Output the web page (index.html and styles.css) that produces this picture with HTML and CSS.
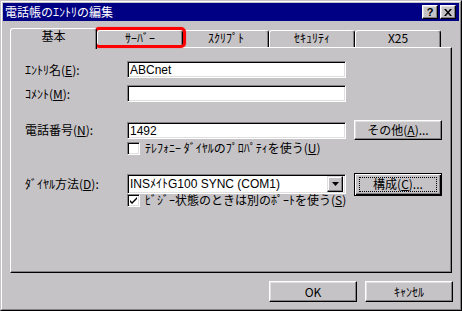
FILE: index.html
```html
<!DOCTYPE html>
<html lang="ja">
<head>
<meta charset="utf-8">
<title>電話帳のｴﾝﾄﾘの編集</title>
<link rel="stylesheet" href="styles.css">
</head>
<body>
<div class="window">
  <div class="window-inner">
    <div class="titlebar">
      <span class="title">電話帳のｴﾝﾄﾘの編集</span>
      <div class="tb-buttons">
        <span class="tb-btn help">?</span>
        <span class="tb-btn close">
          <svg width="8" height="7" viewBox="0 0 8 7"><path d="M0 0h2l2 2.5L6 0h2L5 3.5 8 7H6L4 4.5 2 7H0l3-3.5z" fill="#000"/></svg>
        </span>
      </div>
    </div>
    <div class="client">
      <div class="tabs">
        <div class="tab active">基本</div>
        <div class="tab marked">ｻｰﾊﾞｰ<span class="mark"></span></div>
        <div class="tab">ｽｸﾘﾌﾟﾄ</div>
        <div class="tab">ｾｷｭﾘﾃｨ</div>
        <div class="tab">X25</div>
      </div>
      <div class="panel">
        <div class="row r1">
          <span class="lbl">ｴﾝﾄﾘ名(<u>E</u>):</span>
          <div class="field">ABCnet</div>
        </div>
        <div class="row r2">
          <span class="lbl">ｺﾒﾝﾄ(<u>M</u>):</span>
          <div class="field"></div>
        </div>
        <div class="row r3">
          <span class="lbl">電話番号(<u>N</u>):</span>
          <div class="field">1492</div>
          <div class="btn side">その他(<u>A</u>)...</div>
        </div>
        <div class="check c1">
          <span class="cb"></span>
          <span class="cb-text">ﾃﾚﾌｫﾆｰ ﾀﾞｲﾔﾙのﾌﾟﾛﾊﾟﾃｨを使う(<u>U</u>)</span>
        </div>
        <div class="row r4">
          <span class="lbl">ﾀﾞｲﾔﾙ方法(<u>D</u>):</span>
          <div class="field combo">
            <span class="combo-text">INSﾒｲﾄG100 SYNC (COM1)</span>
            <span class="drop"><svg width="7" height="4" viewBox="0 0 7 4"><path d="M0 0h7L3.5 4z" fill="#000"/></svg></span>
          </div>
          <div class="btn side default"><span class="focus">構成(<u>C</u>)...</span></div>
        </div>
        <div class="check c2">
          <span class="cb"><svg width="9" height="9" viewBox="0 0 9 9"><path d="M1 4l2 2 5-5v2L3 8 1 6z" fill="#000"/></svg></span>
          <span class="cb-text">ﾋﾞｼﾞｰ状態のときは別のﾎﾟｰﾄを使う(<u>S</u>)</span>
        </div>
      </div>
      <div class="footer">
        <div class="btn foot">OK</div>
        <div class="btn foot">ｷｬﾝｾﾙ</div>
      </div>
    </div>
  </div>
</div>
</body>
</html>
```

FILE: styles.css
```css
* { box-sizing: border-box; }
html, body { margin: 0; padding: 0; }
body {
  width: 462px;
  height: 311px;
  background: #c6c3c6;
  font-family: "Noto Sans CJK JP", sans-serif;
  font-size: 12px;
  line-height: 14px;
  color: #000;
}
u { text-decoration: underline; text-underline-offset: 1px; }

.window {
  width: 462px;
  height: 311px;
  border: 1px solid;
  border-color: #c6c3c6 #000 #000 #c6c3c6;
  background: #c6c3c6;
  display: flex;
}
.window-inner {
  flex: 1;
  border: 1px solid;
  border-color: #fff #848284 #848284 #fff;
  padding: 1px;
  display: flex;
  flex-direction: column;
}

.titlebar {
  height: 18px;
  background: #000084;
  color: #fff;
  display: flex;
  align-items: center;
  justify-content: space-between;
  padding: 0 3px 0 2px;
}
.title { font-size: 12px; letter-spacing: 0; }
.tb-buttons { display: flex; gap: 2px; }
.tb-btn {
  width: 16px;
  height: 14px;
  background: #c6c3c6;
  border: 1px solid;
  border-color: #fff #000 #000 #fff;
  box-shadow: inset -1px -1px #848284, inset 1px 1px #dedfde;
  color: #000;
  display: flex;
  align-items: center;
  justify-content: center;
  font-family: "Liberation Sans", sans-serif;
  font-weight: bold;
  font-size: 11px;
  line-height: 11px;
}

.client {
  flex: 1;
  padding: 7px 7px 0 7px;
  display: flex;
  flex-direction: column;
}

.tabs {
  display: flex;
  align-items: flex-end;
  height: 19px;
  position: relative;
  z-index: 1;
}
.tab {
  width: 86px;
  height: 17px;
  border: 1px solid;
  border-color: #fff #000 transparent #fff;
  border-bottom: none;
  border-radius: 3px 3px 0 0;
  box-shadow: inset -1px 0 #848284;
  background: #c6c3c6;
  display: flex;
  justify-content: center;
  align-items: flex-start;
}
.tab.active {
  width: 87px;
  height: 21px;
  margin-bottom: -2px;
  position: relative;
  z-index: 2;
}
.tab.marked { position: relative; }
.mark {
  position: absolute;
  left: -4px;
  top: -4px;
  width: 92px;
  height: 21px;
  border: 3px solid #ff0000;
  border-radius: 5px;
  box-shadow: 0 0 1px #ff4040;
}

.panel {
  height: 226px;
  border: 1px solid;
  border-color: #fff #000 #000 #fff;
  box-shadow: inset -1px -1px #848284;
  padding: 13px 0 0 14px;
  display: flex;
  flex-direction: column;
}

.row { display: flex; align-items: center; }
.lbl { width: 102px; flex: none; white-space: nowrap; }
.r1 { height: 17px; }
.r2 { height: 17px; margin-top: 7px; }
.r3 { height: 20px; margin-top: 18px; }
.r4 { height: 20px; margin-top: 19px; }

.field {
  width: 219px;
  height: 17px;
  flex: none;
  background: #fff;
  border: 1px solid;
  border-color: #848284 #fff #fff #848284;
  box-shadow: inset 1px 1px #000, inset -1px -1px #dedfde;
  padding: 1px 0 0 2px;
  font-family: "Liberation Sans", "Noto Sans CJK JP", sans-serif;
  font-size: 12px;
  line-height: 14px;
  white-space: nowrap;
}
.field.combo {
  height: 20px;
  display: flex;
  align-items: center;
  justify-content: space-between;
  padding: 0 2px 0 2px;
}
.drop {
  width: 16px;
  height: 16px;
  background: #c6c3c6;
  border: 1px solid;
  border-color: #dedfde #000 #000 #dedfde;
  box-shadow: inset -1px -1px #848284, inset 1px 1px #fff;
  display: flex;
  align-items: center;
  justify-content: center;
}

.btn {
  background: #c6c3c6;
  border: 1px solid;
  border-color: #fff #000 #000 #fff;
  box-shadow: inset -1px -1px #848284, inset 1px 1px #dedfde;
  display: flex;
  align-items: center;
  justify-content: center;
  white-space: nowrap;
}
.btn.side { width: 88px; height: 20px; margin-left: 8px; }
.btn.default {
  height: 23px;
  border-color: #000;
  box-shadow: inset 1px 1px #fff, inset -1px -1px #000, inset -2px -2px #848284;
}
.focus {
  width: 78px;
  height: 15px;
  border: 1px dotted #000;
  display: flex;
  align-items: center;
  justify-content: center;
}

.check {
  display: flex;
  align-items: center;
  height: 14px;
  padding-left: 102px;
}
.c1 { margin-top: 1px; }
.c2 { margin-top: -1px; }
.cb {
  width: 13px;
  height: 13px;
  flex: none;
  background: #fff;
  border: 1px solid;
  border-color: #848284 #fff #fff #848284;
  box-shadow: inset 1px 1px #000, inset -1px -1px #dedfde;
  display: flex;
  align-items: center;
  justify-content: center;
}
.cb-text { margin-left: 5px; white-space: nowrap; }

.footer {
  display: flex;
  justify-content: flex-end;
  gap: 8px;
  margin-top: 8px;
  margin-right: -1px;
}
.btn.foot { width: 88px; height: 21px; }
```
